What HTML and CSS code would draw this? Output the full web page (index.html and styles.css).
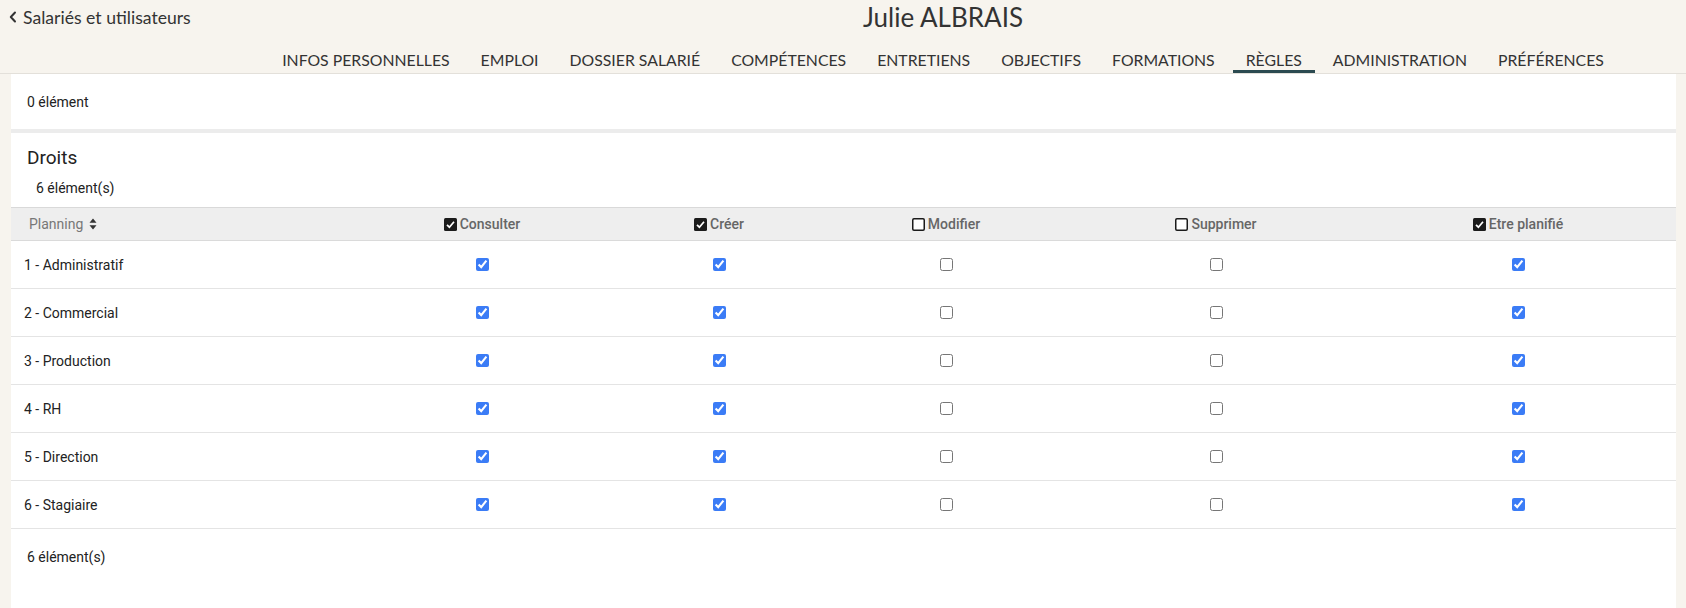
FILE: index.html
```html
<!DOCTYPE html>
<html lang="fr">
<head>
  <meta charset="UTF-8" />
  <title>Julie ALBRAIS - Règles</title>
  <link rel="stylesheet" href="styles.css">
</head>
<body>
  <div id="header-container">
    <a class="back-link" href="#">
      <svg class="chevron" width="8" height="12" viewBox="0 0 8 12"><polyline points="6,1.5 1.8,6 6,10.5" fill="none" stroke="#333" stroke-width="2" stroke-linecap="round" stroke-linejoin="round"/></svg>
      <span>Salariés et utilisateurs</span>
    </a>
    <div class="person-name">Julie ALBRAIS</div>
    <nav class="tabs">
      <a class="tab" href="#">INFOS PERSONNELLES</a>
      <a class="tab" href="#">EMPLOI</a>
      <a class="tab" href="#">DOSSIER SALARIÉ</a>
      <a class="tab" href="#">COMPÉTENCES</a>
      <a class="tab" href="#">ENTRETIENS</a>
      <a class="tab" href="#">OBJECTIFS</a>
      <a class="tab" href="#">FORMATIONS</a>
      <a class="tab active" href="#">RÈGLES</a>
      <a class="tab" href="#">ADMINISTRATION</a>
      <a class="tab" href="#">PRÉFÉRENCES</a>
    </nav>
  </div>

  <div id="cards">
    <div class="card card-small">0 élément</div>

    <div class="card card-rights">
      <div class="card-title">Droits</div>
      <div class="count">6 élément(s)</div>
      <table class="rights">
        <colgroup>
          <col style="width:335px"><col style="width:272px"><col style="width:202px">
          <col style="width:252px"><col style="width:288px"><col style="width:316px">
        </colgroup>
        <thead>
          <tr>
            <th class="col-name">Planning
              <svg class="sort" width="8" height="12" viewBox="0 0 8 12"><path d="M4 0.5 L7.5 4.8 H0.5 Z M4 11.5 L7.5 7.2 H0.5 Z" fill="#333"/></svg>
            </th>
            <th><span class="head-box checked"></span>Consulter</th>
            <th><span class="head-box checked"></span>Créer</th>
            <th><span class="head-box"></span>Modifier</th>
            <th><span class="head-box"></span>Supprimer</th>
            <th><span class="head-box checked"></span>Etre planifié</th>
          </tr>
        </thead>
        <tbody id="rights-body"></tbody>
      </table>
      <div class="count-footer">6 élément(s)</div>
    </div>
  </div>

  <script>
    const plannings = ['1 - Administratif', '2 - Commercial', '3 - Production', '4 - RH', '5 - Direction', '6 - Stagiaire'];
    const rights = [true, true, false, false, true];

    const tbody = document.getElementById('rights-body');
    plannings.forEach(name => {
      const tr = tbody.insertRow();
      const tdName = tr.insertCell();
      tdName.className = 'col-name';
      tdName.textContent = name;
      rights.forEach(on => {
        const td = tr.insertCell();
        const box = document.createElement('input');
        box.type = 'checkbox';
        box.checked = on;
        td.appendChild(box);
      });
    });

    document.querySelectorAll('.head-box').forEach(el => {
      el.innerHTML = el.classList.contains('checked')
        ? '<svg width="13" height="13" viewBox="0 0 13 13"><rect x="0" y="0" width="13" height="13" rx="1.5" fill="#1b1b1b"/><polyline points="3,6.8 5.4,9.2 10,3.8" fill="none" stroke="#fff" stroke-width="1.7"/></svg>'
        : '<svg width="13" height="13" viewBox="0 0 13 13"><rect x="0.75" y="0.75" width="11.5" height="11.5" rx="1.2" fill="#fff" stroke="#1b1b1b" stroke-width="1.5"/></svg>';
    });
  </script>
</body>
</html>
```

FILE: styles.css
```css
:root {
  --beige: #f7f4ee;
  --text: #222222;
  --muted: #666666;
  --line: #e4e4e4;
  --tab-active: #2b4a50;
}
body {
  margin: 0;
  padding: 0;
  background: var(--beige);
  color: var(--text);
  font-family: Roboto, "Liberation Sans", sans-serif;
  font-size: 14px;
}
#header-container {
  display: grid;
  grid-template-columns: 200px 1fr;
  padding-top: 2px;
  border-bottom: 1px solid #e3e0da;
  font-family: Lato, "Open Sans", sans-serif;
  color: #333;
}
.back-link {
  display: flex;
  align-items: center;
  gap: 6px;
  padding-left: 9px;
  height: 30px;
  color: #333;
  text-decoration: none;
  font-size: 17.6px;
}
.person-name {
  text-align: center;
  font-size: 26px;
  line-height: 30px;
}
.tabs {
  grid-column: 2;
  display: flex;
  justify-content: center;
  gap: 5px;
  margin-top: 18px;
}
.tab {
  padding: 0 13px;
  line-height: 20px;
  font-size: 15.8px;
  color: #333;
  text-decoration: none;
  border-bottom: 3px solid transparent;
}
.tab.active {
  border-bottom-color: var(--tab-active);
}
#cards {
  display: flex;
  flex-direction: column;
  gap: 4px;
  margin: 0 10px 0 11px;
  background: #ececec;
}
.card {
  background: #fff;
}
.card-small {
  display: flex;
  align-items: center;
  height: 55px;
  padding-left: 16px;
}
.card-rights {
  padding-top: 13px;
  padding-bottom: 70px;
}
.card-title {
  padding-left: 16px;
  font-size: 19px;
  line-height: 24px;
}
.count {
  padding-left: 25px;
  margin-top: 9px;
  line-height: 18px;
}
.count-footer {
  padding-left: 16px;
  margin-top: 19px;
  line-height: 18px;
}
table.rights {
  width: 100%;
  table-layout: fixed;
  border-collapse: collapse;
  margin-top: 10px;
}
.rights th {
  height: 32px;
  padding: 0;
  background: #eeeeee;
  border-top: 1px solid #d9d9d9;
  border-bottom: 1px solid #dadada;
  color: var(--muted);
  font-weight: 500;
  font-size: 14px;
  text-align: center;
  vertical-align: middle;
}
.rights th.col-name {
  text-align: left;
  padding-left: 18px;
  font-weight: 400;
  color: #777;
}
.sort {
  vertical-align: -1px;
  margin-left: 2px;
}
.head-box {
  display: inline-block;
  width: 13px;
  height: 13px;
  margin-right: 3px;
  vertical-align: -2px;
}
.head-box svg {
  display: block;
}
.rights td {
  height: 47px;
  padding: 0;
  border-bottom: 1px solid var(--line);
  text-align: center;
  vertical-align: middle;
}
.rights td.col-name {
  text-align: left;
  padding-left: 13px;
}
.rights input[type="checkbox"] {
  width: 13px;
  height: 13px;
  margin: -2px 0 0;
  vertical-align: middle;
  accent-color: #3b7cf6;
}
```
